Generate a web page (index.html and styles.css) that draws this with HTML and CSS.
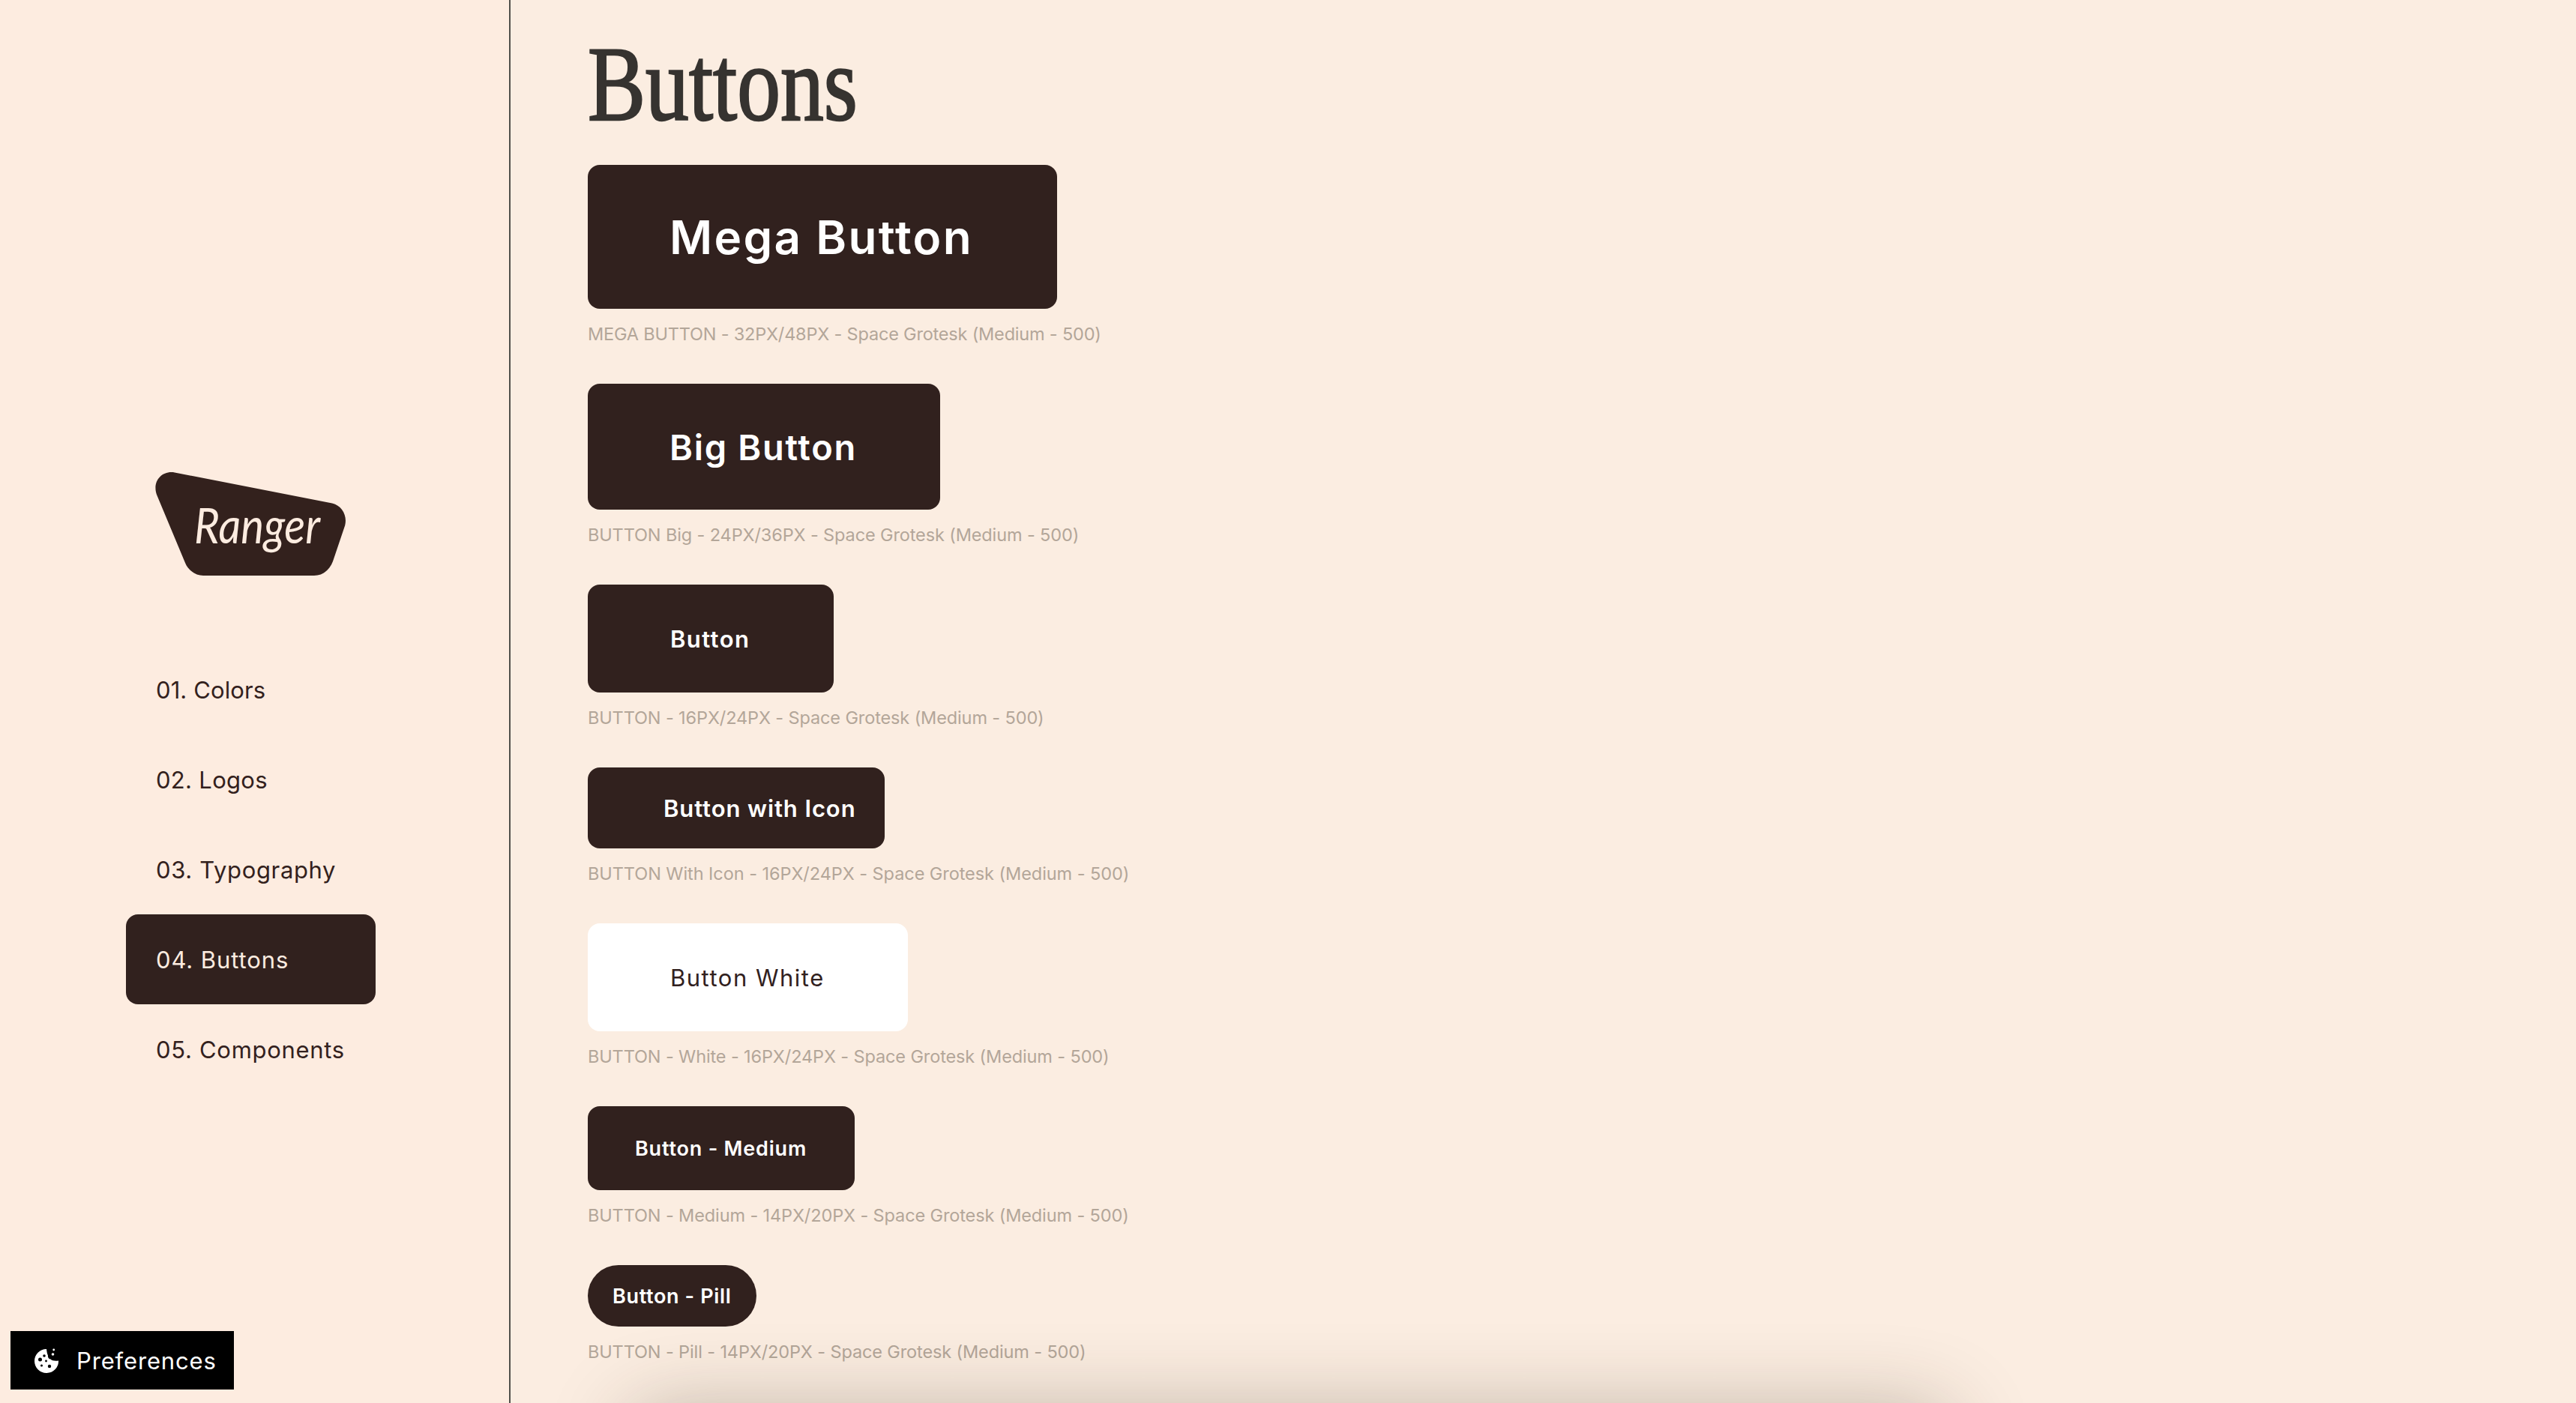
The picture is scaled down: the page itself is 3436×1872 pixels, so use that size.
FILE: index.html
```html
<!DOCTYPE html>
<html lang="en">
<head>
<meta charset="utf-8">
<title>Ranger – Buttons</title>
<link rel="stylesheet" href="styles.css">
</head>
<body>
<div class="page">
  <div class="layout">
    <aside class="sidebar">
      <svg class="logo" viewBox="0 0 254 138" role="img" aria-label="Ranger">
        <path fill="#33211d" d="M26 .4 L236 41.500 C249 44.500 256.500 58 253.200 71 L237 119 C233 130 224 138 212 138 H64 C54 138 44 131 40 121 L2 30 C-4 13 8-2.500 26 .4Z"/>
        <text class="logo-word" x="52" y="94.500" textLength="168" lengthAdjust="spacingAndGlyphs">Ranger</text>
      </svg>
      <nav class="nav">
        <a class="nav-item colors">01. Colors</a>
        <a class="nav-item logos">02. Logos</a>
        <a class="nav-item typography">03. Typography</a>
        <a class="nav-item buttons active">04. Buttons</a>
        <a class="nav-item components">05. Components</a>
      </nav>
    </aside>
    <main class="content">
      <h1 class="title"><span>Buttons</span></h1>
      <section class="sample"><a class="btn mega">Mega Button</a><p class="caption tight">MEGA BUTTON - 32PX/48PX - Space Grotesk (Medium - 500)</p></section>
      <section class="sample"><a class="btn big">Big Button</a><p class="caption">BUTTON Big - 24PX/36PX - Space Grotesk (Medium - 500)</p></section>
      <section class="sample"><a class="btn base">Button</a><p class="caption">BUTTON - 16PX/24PX - Space Grotesk (Medium - 500)</p></section>
      <section class="sample"><a class="btn icon">Button with Icon</a><p class="caption loose">BUTTON With Icon - 16PX/24PX - Space Grotesk (Medium - 500)</p></section>
      <section class="sample"><a class="btn white">Button White</a><p class="caption">BUTTON - White - 16PX/24PX - Space Grotesk (Medium - 500)</p></section>
      <section class="sample"><a class="btn medium">Button - Medium</a><p class="caption">BUTTON - Medium - 14PX/20PX - Space Grotesk (Medium - 500)</p></section>
      <section class="sample"><a class="btn pill">Button - Pill</a><p class="caption">BUTTON - Pill - 14PX/20PX - Space Grotesk (Medium - 500)</p></section>
    </main>
  </div>
  <div class="sheet"></div>
  <button class="prefs">
    <svg class="cookie" viewBox="0 0 32 33"><path fill="#fff" d="M16 1C16.500 5 17 8 18 9.500C17.500 12 19 14.500 21.500 14.500C23 16.500 27 17 32 16.500A16 16 0 1 1 16 1Z"/><g fill="#000"><circle cx="13" cy="10" r="1.800"/><circle cx="7.500" cy="15" r="2.500"/><circle cx="15.500" cy="17" r="1.400"/><circle cx="9.500" cy="23" r="1.500"/><circle cx="20" cy="24" r="2.200"/></g><g fill="#fff"><circle cx="25.700" cy="2" r="1.400"/><circle cx="24.500" cy="8" r="1.800"/></g></svg>
    <span>Preferences</span>
  </button>
</div>
</body>
</html>
```
FILE: styles.css
```css
* { box-sizing: border-box; }
body {
  margin: 0;
  color: #33211d;
  font-family: Inter, "Liberation Sans", sans-serif;
}
.page {
  position: relative;
  height: 1872px;
  overflow: hidden;
  background: #fbede1;
}
.layout { display: flex; height: 1872px; }
.sidebar {
  width: 681px;
  flex: none;
  padding: 630px 0 0 168px;
  background: #fdece0;
  border-right: 2px solid #50504b;
}
.logo { display: block; width: 254px; height: 138px; margin-left: 39px; overflow: visible; }
.logo-word { font: italic 400 66px Lato, sans-serif; fill: #fdece0; }
.nav { width: 333px; margin-top: 92px; }
.nav-item {
  display: flex;
  align-items: center;
  height: 120px;
  padding: 0 0 0 40px;
  border-radius: 16px;
  font-size: 31px;
  white-space: nowrap;
}
.colors { letter-spacing: 0.1px; }
.logos { letter-spacing: 0.3px; }
.typography { letter-spacing: 0.65px; }
.buttons { letter-spacing: 0.9px; }
.components { letter-spacing: 0.7px; }
.active { background: #31211e; color: #fdece0; }
.content { flex: 1; padding-left: 103px; }
.title {
  margin: 0;
  height: 220px;
  padding-top: 5px;
  color: #363330;
  font: 400 141px/215px "Liberation Serif", serif;
}
.title span { display: inline-block; transform-origin: 0 50%; transform: scaleX(0.82); -webkit-text-stroke: 2.5px #363330; }
.sample + .sample { margin-top: 24px; }
.btn {
  display: flex;
  align-items: center;
  border-radius: 16px;
  background: #31211e;
  color: #fff;
  font-weight: 600;
  white-space: nowrap;
}
.mega { width: 626px; height: 192px; padding-left: 109px; font-size: 62px; letter-spacing: 2.3px; }
.big { width: 470px; height: 168px; padding-left: 109px; font-size: 47px; letter-spacing: 1.7px; }
.base { width: 328px; height: 144px; padding-left: 110px; font-size: 31px; letter-spacing: 1.4px; }
.icon { width: 396px; height: 108px; padding-left: 101px; font-size: 31px; letter-spacing: 0.9px; }
.white { width: 427px; height: 144px; padding-left: 110px; font-size: 31px; letter-spacing: 1.5px; background: #fff; color: #31211e; font-weight: 400; }
.medium { width: 356px; height: 112px; padding-left: 63px; font-size: 27px; letter-spacing: 0.8px; }
.pill { width: 225px; height: 82px; padding-left: 33px; font-size: 27px; letter-spacing: 0.65px; border-radius: 41px; }
.caption {
  margin: 0;
  height: 76px;
  padding-top: 17.5px;
  font-size: 23.5px;
  line-height: 32px;
  letter-spacing: -0.12px;
  color: #b3a699;
  white-space: nowrap;
}
.tight { letter-spacing: -0.19px; }
.loose { letter-spacing: -0.06px; }
.sheet {
  position: absolute;
  left: 840px;
  top: 1880px;
  width: 1762px;
  height: 300px;
  border-radius: 40px;
  box-shadow: 0 0 110px rgba(48, 38, 20, 0.29);
}
.prefs {
  position: absolute;
  left: 14px;
  top: 1776px;
  width: 298px;
  height: 78px;
  display: flex;
  align-items: center;
  gap: 24px;
  padding: 0 0 0 32px;
  border: 0;
  background: #000;
  color: #fff;
  font: 400 31px Inter, sans-serif;
  letter-spacing: 0.85px;
}
.cookie { width: 32px; height: 33px; flex: none; }
```
